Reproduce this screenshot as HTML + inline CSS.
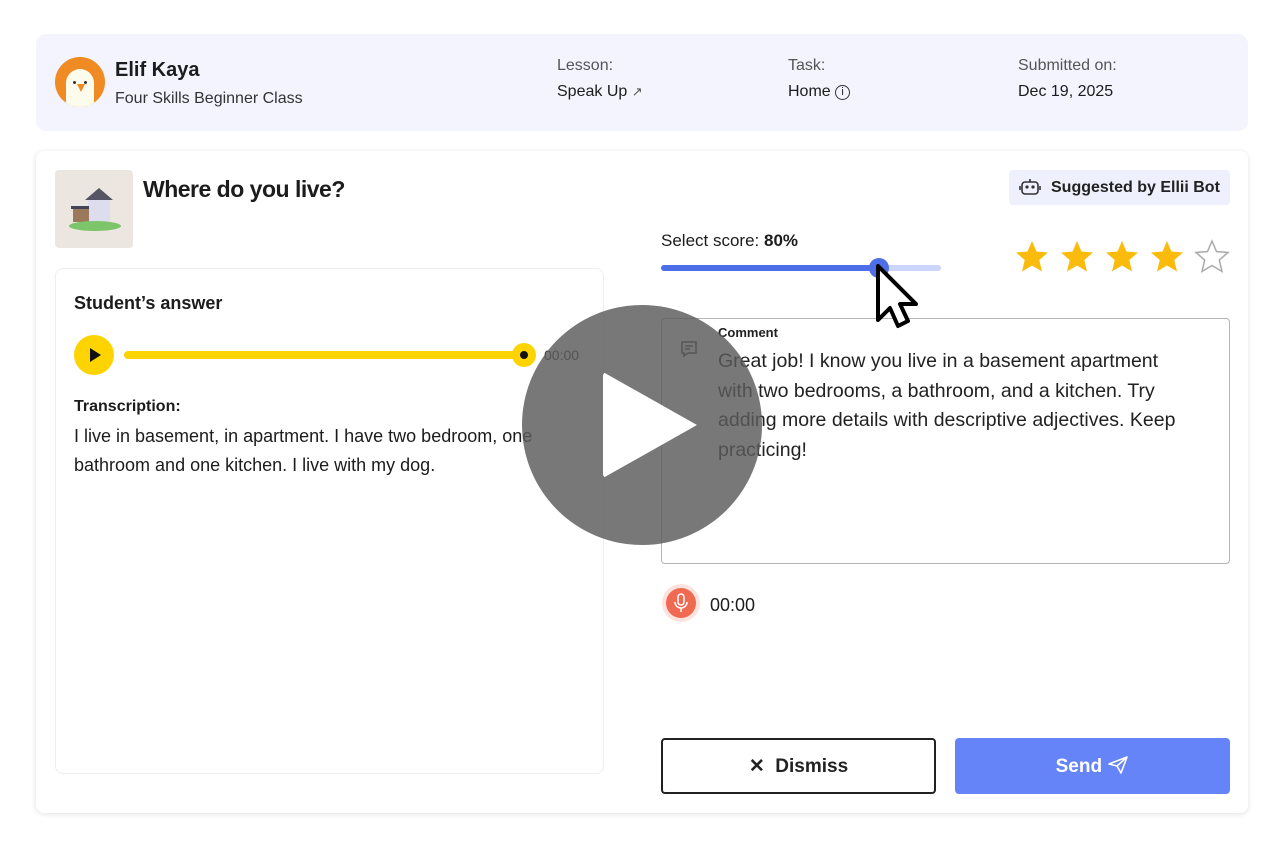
<!DOCTYPE html><html><head><style>
*{box-sizing:border-box;margin:0;padding:0}
body{width:1285px;height:850px;background:#fff;font-family:"Liberation Sans",sans-serif;color:#1c1c1c;position:relative;overflow:hidden}
.a{position:absolute}
</style></head><body>
<div class="a" style="left:36px;top:34px;width:1212px;height:97px;background:#f3f4fd;border-radius:10px"></div>
<div class="a" style="left:55px;top:57px;width:50px;height:50px;border-radius:50%;background:#f08a22;overflow:hidden">
 <div class="a" style="left:11px;top:12px;width:28px;height:44px;background:#fdfbec;border-radius:14px 14px 0 0"></div>
 <div class="a" style="left:18px;top:24px;width:3px;height:3px;background:#333;border-radius:50%"></div>
 <div class="a" style="left:29px;top:24px;width:3px;height:3px;background:#333;border-radius:50%"></div>
 <div class="a" style="left:22px;top:27px;width:0;height:0;border-left:4px solid transparent;border-right:4px solid transparent;border-top:8px solid #f08a22"></div>
</div>
<div class="a" style="left:115px;top:59px;font-size:20px;font-weight:bold">Elif Kaya</div>
<div class="a" style="left:115px;top:90px;font-size:16px;color:#333">Four Skills Beginner Class</div>
<div class="a" style="left:557px;top:57px;font-size:16px;color:#555">Lesson:</div>
<div class="a" style="left:557px;top:83px;font-size:16px">Speak Up <span style="font-size:13px;color:#555">↗</span></div>
<div class="a" style="left:788px;top:57px;font-size:16px;color:#555">Task:</div>
<div class="a" style="left:788px;top:83px;font-size:16px">Home <span style="display:inline-block;width:15px;height:15px;border:1.5px solid #333;border-radius:50%;font-size:11px;text-align:center;line-height:12px;vertical-align:1px">i</span></div>
<div class="a" style="left:1018px;top:57px;font-size:16px;color:#555">Submitted on:</div>
<div class="a" style="left:1018px;top:83px;font-size:16px">Dec 19, 2025</div>

<div class="a" style="left:36px;top:151px;width:1212px;height:662px;background:#fff;border-radius:8px;box-shadow:0 1px 6px rgba(0,0,0,.12)"></div>
<div class="a" style="left:55px;top:170px;width:78px;height:78px;background:#ebe6df;border-radius:4px">
 <svg width="78" height="78"><polygon points="30,30 44,18 58,30" fill="#556"/><rect x="33" y="30" width="22" height="22" fill="#dde"/><rect x="18" y="38" width="16" height="14" fill="#9a7a5a"/><rect x="16" y="36" width="18" height="3" fill="#445"/><ellipse cx="40" cy="56" rx="26" ry="5" fill="#7cc56a"/></svg>
</div>
<div class="a" style="left:143px;top:176px;font-size:23px;font-weight:bold;letter-spacing:-.5px">Where do you live?</div>

<div class="a" style="left:1009px;top:170px;width:221px;height:35px;background:#eef0fd;border-radius:4px"></div>
<svg class="a" style="left:1019px;top:177px" width="22" height="20" viewBox="0 0 22 20"><rect x="3" y="5" width="16" height="12" rx="3" fill="none" stroke="#333" stroke-width="1.6"/><circle cx="8" cy="10" r="1.6" fill="#333"/><circle cx="14" cy="10" r="1.6" fill="#333"/><line x1="11" y1="2" x2="11" y2="5" stroke="#333" stroke-width="1.6"/><line x1="1" y1="9" x2="1" y2="13" stroke="#333" stroke-width="1.6"/><line x1="21" y1="9" x2="21" y2="13" stroke="#333" stroke-width="1.6"/></svg>
<div class="a" style="left:1051px;top:179px;font-size:16px;font-weight:bold;color:#222">Suggested by Ellii Bot</div>

<div class="a" style="left:661px;top:231px;font-size:17px">Select score: <b>80%</b></div>
<div class="a" style="left:661px;top:265px;width:280px;height:6px;background:#ccd5fb;border-radius:3px"></div>
<div class="a" style="left:661px;top:265px;width:218px;height:6px;background:#4e6ee8;border-radius:3px"></div>
<div class="a" style="left:869px;top:258px;width:20px;height:20px;background:#4e6ee8;border-radius:50%"></div>
<svg class="a" style="left:1012px;top:238px" width="222" height="40" viewBox="0 0 222 40">
<defs><path id="s" d="M18 3 L22.5 13.5 L34 14.5 L25.3 22 L28 33.5 L18 27.5 L8 33.5 L10.7 22 L2 14.5 L13.5 13.5Z"/></defs>
<use href="#s" x="2" fill="#fbbb0d"/><use href="#s" x="47" fill="#fbbb0d"/><use href="#s" x="92" fill="#fbbb0d"/><use href="#s" x="137" fill="#fbbb0d"/><use href="#s" x="182" fill="none" stroke="#aaa" stroke-width="1.5"/></svg>

<div class="a" style="left:55px;top:268px;width:549px;height:506px;border:1.5px solid #eceef0;border-radius:8px"></div>
<div class="a" style="left:74px;top:293px;font-size:18px;font-weight:bold">Student’s answer</div>
<div class="a" style="left:74px;top:335px;width:40px;height:40px;background:#fdd400;border-radius:50%"></div>
<div class="a" style="left:90px;top:348px;width:0;height:0;border-top:7px solid transparent;border-bottom:7px solid transparent;border-left:11px solid #111"></div>
<div class="a" style="left:124px;top:351px;width:400px;height:8px;background:#fdd400;border-radius:4px"></div>
<div class="a" style="left:512px;top:343px;width:24px;height:24px;background:#fdd400;border-radius:50%"></div>
<div class="a" style="left:519px;top:350px;width:10px;height:10px;background:#111;border-radius:50%;border:1px solid #fdd400"></div>
<div class="a" style="left:544px;top:347px;font-size:14px;color:#333">00:00</div>
<div class="a" style="left:74px;top:398px;font-size:16px;font-weight:bold">Transcription:</div>
<div class="a" style="left:74px;top:422px;width:520px;font-size:18px;line-height:29px">I live in basement, in apartment. I have two bedroom, one bathroom and one kitchen. I live with my dog.</div>

<div class="a" style="left:661px;top:318px;width:569px;height:246px;border:1.5px solid #b5b5b5;border-radius:4px"></div>
<div class="a" style="left:718px;top:325px;font-size:13px;font-weight:bold;color:#222">Comment</div>
<svg class="a" style="left:679px;top:339px" width="20" height="20" viewBox="0 0 20 20"><path d="M3 3h14v11H9l-4 3v-3H3z" fill="none" stroke="#444" stroke-width="1.5"/><line x1="6" y1="7" x2="14" y2="7" stroke="#444" stroke-width="1.5"/><line x1="6" y1="10" x2="11" y2="10" stroke="#444" stroke-width="1.5"/></svg>
<div class="a" style="left:718px;top:347px;width:462px;font-size:19.5px;line-height:29.5px;color:#222">Great job! I know you live in a basement apartment with two bedrooms, a bathroom, and a kitchen. Try adding more details with descriptive adjectives. Keep practicing!</div>

<div class="a" style="left:662px;top:584px;width:38px;height:38px;border-radius:50%;background:#fde3dd"></div>
<div class="a" style="left:666px;top:588px;width:30px;height:30px;border-radius:50%;background:#f06a52"></div>
<svg class="a" style="left:671px;top:592px" width="20" height="22" viewBox="0 0 20 22"><rect x="7" y="2" width="6" height="11" rx="3" fill="none" stroke="#fff" stroke-width="1.5"/><path d="M4 10a6 6 0 0 0 12 0M10 16v4" fill="none" stroke="#fff" stroke-width="1.5"/></svg>
<div class="a" style="left:710px;top:595px;font-size:18px">00:00</div>

<div class="a" style="left:661px;top:738px;width:275px;height:56px;border:2px solid #222;border-radius:4px;text-align:center;line-height:53px;font-size:19px;font-weight:bold;color:#222">✕&nbsp;&nbsp;Dismiss</div>
<div class="a" style="left:955px;top:738px;width:275px;height:56px;background:#6584f8;border-radius:4px;text-align:center;line-height:57px;font-size:19px;font-weight:bold;color:#fff">Send <svg width="22" height="20" viewBox="0 0 22 20" style="vertical-align:-3px"><path d="M2 9 L20 2 L14 18 L10 11 Z M10 11 L20 2" fill="none" stroke="#fff" stroke-width="1.6" stroke-linejoin="round"/></svg></div>

<div class="a" style="left:522px;top:305px;width:240px;height:240px;border-radius:50%;background:rgba(90,90,90,.82)"></div>
<div class="a" style="left:603px;top:372px;width:0;height:0;border-top:53px solid transparent;border-bottom:53px solid transparent;border-left:94px solid #fff;border-radius:4px"></div>

<svg class="a" style="left:870px;top:262px" width="54" height="70" viewBox="0 0 54 70"><path d="M8 4 L8 58 L20 46 L28 64 L38 59 L30 42 L46 42 Z" fill="#fff" stroke="#000" stroke-width="4" stroke-linejoin="round"/></svg>
</body></html>
